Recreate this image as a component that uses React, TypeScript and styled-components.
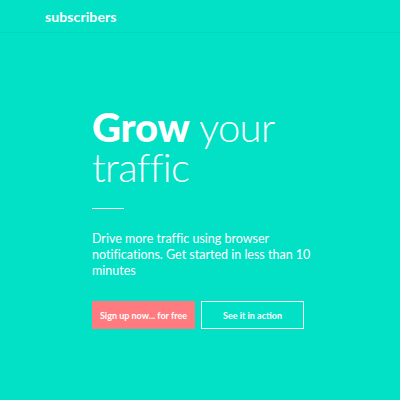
import styled, { createGlobalStyle } from "styled-components";

const GlobalStyle = createGlobalStyle`
  html, body {
    margin: 0;
    padding: 0;
    background: #02e0c6;
  }
  body {
    font-family: "Lato", "Open Sans", sans-serif;
    font-variant-ligatures: none;
    color: #ffffff;
  }
`;

const Page = styled.div`
  width: 400px;
  height: 400px;
  background: #02e0c6;
  display: flex;
  flex-direction: column;
  overflow: hidden;
`;

const TopBar = styled.header`
  height: 33px;
  box-sizing: border-box;
  padding: 6px 45px 0;
  border-bottom: 1px solid #00d8bf;
`;

const Brand = styled.span`
  font-size: 14px;
  font-weight: 700;
  letter-spacing: 0.1px;
`;

const Hero = styled.section`
  width: 216px;
  margin: 74px auto 0;
  display: flex;
  flex-direction: column;
`;

const Title = styled.h1`
  margin: 0;
  font-size: 40px;
  line-height: 40px;
  font-weight: 300;
  letter-spacing: -0.6px;

  strong {
    font-weight: 900;
    letter-spacing: -0.2px;
  }
`;

const Rule = styled.hr`
  width: 32px;
  margin: 21px 0 0;
  border: 0;
  border-top: 1px solid #ffffff;
`;

const Lead = styled.p`
  width: 224px;
  margin: 22px 0 0;
  font-size: 12.5px;
  line-height: 16px;
  font-weight: 400;
`;

const Actions = styled.div`
  display: flex;
  gap: 6px;
  margin-top: 22px;
`;

const ActionButton = styled.button<{ $filled?: boolean }>`
  width: 103px;
  height: 28px;
  box-sizing: border-box;
  font-family: "Lato", sans-serif;
  font-size: 9px;
  font-weight: 700;
  color: #ffffff;
  background: ${({ $filled }) => ($filled ? "#ff7b80" : "transparent")};
  border: ${({ $filled }) => ($filled ? "0" : "1.5px solid #ffffff")};
  padding: 0;
  cursor: pointer;
`;

export default function App() {
  return (
    <>
      <GlobalStyle />
      <Page>
        <TopBar>
          <Brand>subscribers</Brand>
        </TopBar>
        <Hero>
          <Title>
            <strong>Grow</strong> your traffic
          </Title>
          <Rule />
          <Lead>
            Drive more traffic using browser notifications. Get started in less
            than 10 minutes
          </Lead>
          <Actions>
            <ActionButton $filled>Sign up now... for free</ActionButton>
            <ActionButton>See it in action</ActionButton>
          </Actions>
        </Hero>
      </Page>
    </>
  );
}
